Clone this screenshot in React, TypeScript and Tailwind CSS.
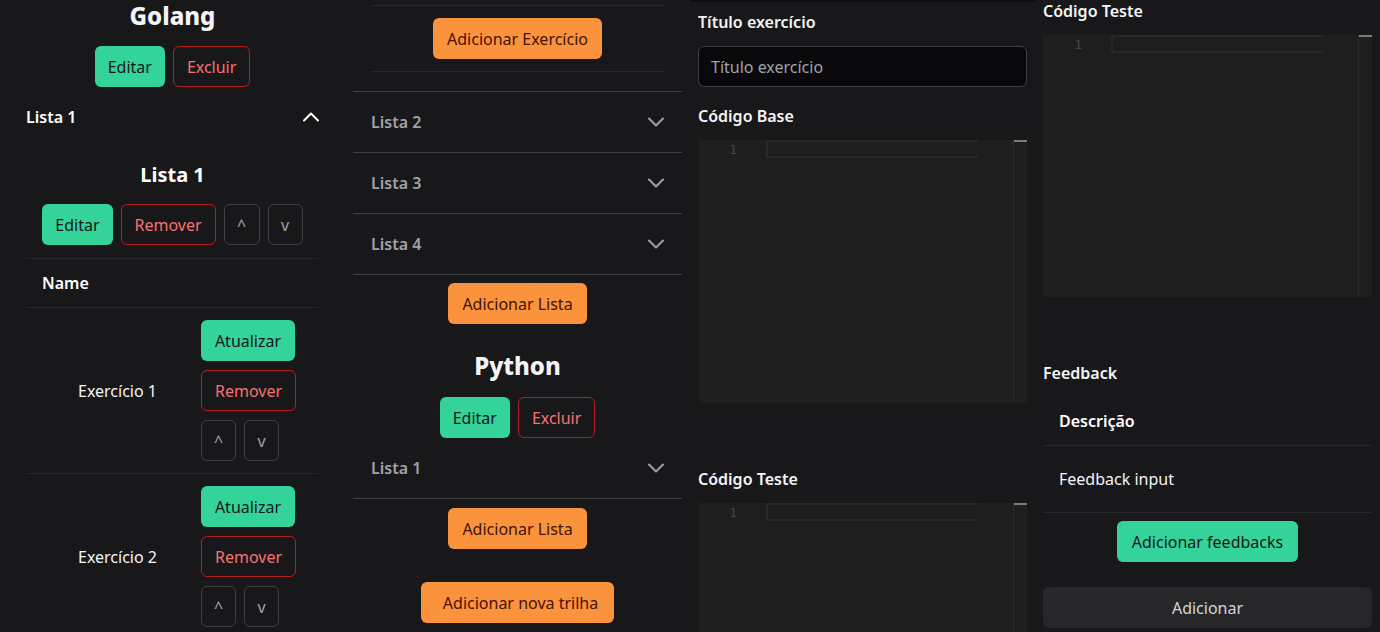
import { ChevronDown, ChevronUp } from 'lucide-react';

const btnBase = 'h-[41px] rounded-md text-base leading-6 flex items-center justify-center shrink-0';
const green = `${btnBase} bg-[#34d399] text-[#18181b] px-[13px]`;
const red = `${btnBase} border border-[#b91c1c] text-[#f87171] px-[13px]`;
const orange = `${btnBase} bg-[#fb923c] text-[#431407] px-[14px]`;
const arrow = `${btnBase} border border-[#3f3f46] text-[#a1a1aa] w-[35px]`;
const label = 'block font-semibold leading-6 text-[#f4f4f5]';

const Editor = ({ height }: { height: string }) => (
  <div className={`${height} bg-[#1e1e1e] flex`}>
    <div className="w-[68px] pt-[1px] pr-[29px] text-right font-['DejaVu_Sans_Mono',monospace] text-[13px] leading-[18px] text-[#454545]">
      1
    </div>
    <div className="flex-1">
      <div className="w-[212px] h-[18px] border-l-2 border-t-2 border-b-2 border-[#282828]" />
    </div>
    <div className="w-[14px] border-l border-[#2b2b2b]">
      <div className="h-[2px] bg-[#7a7a7a]" />
    </div>
  </div>
);

const AccordionTrigger = ({ label, open }: { label: string; open?: boolean }) => (
  <div className="h-[60px] pl-[18px] pr-[12px] flex items-center justify-between">
    <span className={`font-semibold text-base ${open ? 'text-white' : 'text-[#a1a1aa]'}`}>{label}</span>
    {open ? (
      <ChevronUp size={28} strokeWidth={1.7} className="text-white" />
    ) : (
      <ChevronDown size={28} strokeWidth={1.7} className="text-[#a1a1aa]" />
    )}
  </div>
);

const ExerciseRow = ({ name }: { name: string }) => (
  <div className="flex border-b border-[#27272a]">
    <div className="w-[175px] pl-[52px] flex items-center text-base text-[#f4f4f5]">{name}</div>
    <div className="py-[12px] flex flex-col gap-[9px]">
      <button className={`${green} w-[94px] px-0`}>Atualizar</button>
      <button className={`${red} w-[95px] px-0`}>Remover</button>
      <div className="flex gap-2">
        <button className={arrow}>^</button>
        <button className={arrow}>v</button>
      </div>
    </div>
  </div>
);

export default function App() {
  return (
    <div className="w-[1380px] h-[632px] overflow-hidden bg-[#18181b] text-white flex items-start font-['Noto_Sans',sans-serif]">
      {/* coluna 1 */}
      <div className="ml-[8px] w-[329px] shrink-0">
        <h2 className="text-2xl leading-8 font-extrabold text-center text-[#f4f4f5]">Golang</h2>
        <div className="mt-[14px] flex justify-center gap-2">
          <button className={green}>Editar</button>
          <button className={red}>Excluir</button>
        </div>
        <AccordionTrigger label="Lista 1" open />
        <div className="px-[18px]">
          <h3 className="mt-[14px] text-xl leading-7 font-bold text-center">Lista 1</h3>
          <div className="mt-[15px] flex justify-center gap-2">
            <button className={green}>Editar</button>
            <button className={red}>Remover</button>
            <button className={`${arrow} w-[36px]`}>^</button>
            <button className={`${arrow} w-[34px]`}>v</button>
          </div>
          <div className="mt-[13px] border-t border-[#27272a]">
            <div className="h-[49px] border-b border-[#27272a] pl-4 flex items-center font-semibold">Name</div>
            <ExerciseRow name="Exercício 1" />
            <ExerciseRow name="Exercício 2" />
          </div>
        </div>
      </div>

      {/* coluna 2 */}
      <div className="ml-[16px] w-[329px] shrink-0">
        <div className="mx-[18px] mt-[5px] border-t border-[#27272a]" />
        <div className="mt-[12px] flex justify-center">
          <button className={orange}>Adicionar Exercício</button>
        </div>
        <div className="mx-[18px] mt-[12px] h-[20px] border-t border-[#27272a]" />
        <div className="border-b border-[#3f3f46]" />
        <div className="border-b border-[#3f3f46]"><AccordionTrigger label="Lista 2" /></div>
        <div className="border-b border-[#3f3f46]"><AccordionTrigger label="Lista 3" /></div>
        <div className="border-b border-[#3f3f46]"><AccordionTrigger label="Lista 4" /></div>
        <div className="mt-[8px] flex justify-center">
          <button className={orange}>Adicionar Lista</button>
        </div>
        <h2 className="mt-[26px] text-2xl leading-8 font-extrabold text-center text-[#f4f4f5]">Python</h2>
        <div className="mt-[15px] flex justify-center gap-2">
          <button className={green}>Editar</button>
          <button className={red}>Excluir</button>
        </div>
        <div className="border-b border-[#3f3f46]"><AccordionTrigger label="Lista 1" /></div>
        <div className="mt-[9px] flex justify-center">
          <button className={orange}>Adicionar Lista</button>
        </div>
        <div className="mt-[33px] flex justify-center">
          <button className={`${orange} pl-[22px] pr-[16px]`}>Adicionar nova trilha</button>
        </div>
      </div>

      {/* coluna 3 */}
      <div className="ml-[8px] w-[345px] shrink-0 px-[8px] border-t-2 border-[#0e0e10]">
        <label className={`${label} mt-[8px]`}>Título exercício</label>
        <div className="mt-[12px] h-[41px] rounded-md border border-[#3f3f46] bg-[#09090b] px-3 flex items-center text-[#a1a1aa]">
          Título exercício
        </div>
        <label className={`${label} mt-[17px]`}>Código Base</label>
        <div className="mt-[12px]"><Editor height="h-[263px]" /></div>
        <label className={`${label} mt-[64px]`}>Código Teste</label>
        <div className="mt-[12px]"><Editor height="h-[263px]" /></div>
      </div>

      {/* coluna 4 */}
      <div className="ml-[8px] w-[329px] shrink-0">
        <label className="block h-[22px] font-semibold leading-[22px] text-[#f4f4f5]">Código Teste</label>
        <div className="mt-[13px]"><Editor height="h-[262px]" /></div>
        <label className={`${label} mt-[64px]`}>Feedback</label>
        <div className="mt-[12px]">
          <div className="h-[49px] border-b border-[#27272a] pl-4 flex items-center font-semibold">Descrição</div>
          <div className="h-[67px] border-b border-[#27272a] pl-4 flex items-center text-[#f4f4f5]">Feedback input</div>
        </div>
        <div className="mt-[8px] flex justify-center">
          <button className={`${green} px-[15px]`}>Adicionar feedbacks</button>
        </div>
        <button className="mt-[25px] w-full h-[41px] rounded-md bg-[#27272a] text-[#d4d4d8]">Adicionar</button>
      </div>
    </div>
  );
}
